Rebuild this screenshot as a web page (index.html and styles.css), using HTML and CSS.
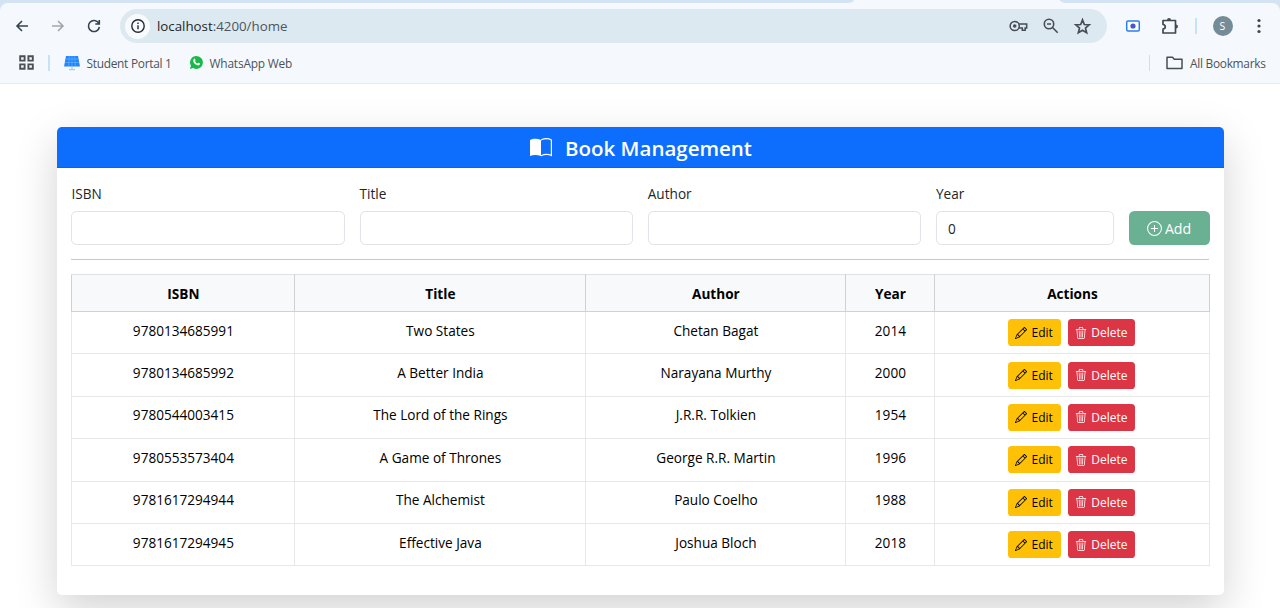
FILE: index.html
```html
<!DOCTYPE html>
<html lang="en">
<head>
<meta charset="utf-8">
<title>Book Management</title>
<link rel="stylesheet" href="styles.css">
</head>
<body>
<svg class="defs" aria-hidden="true">
  <symbol id="pencil" viewBox="0 0 16 16"><path d="M12.146.146a.5.5 0 0 1 .708 0l3 3a.5.5 0 0 1 0 .708l-10 10a.5.5 0 0 1-.168.11l-5 2a.5.5 0 0 1-.65-.65l2-5a.5.5 0 0 1 .11-.168zM11.207 2.5 13.5 4.793 14.793 3.5 12.5 1.207zm1.586 3L10.5 3.207 4 9.707V10h.5a.5.5 0 0 1 .5.5v.5h.5a.5.5 0 0 1 .5.5v.5h.293zm-9.761 5.175-.106.106-1.528 3.821 3.821-1.528.106-.106A.5.5 0 0 1 5 12.5V12h-.5a.5.5 0 0 1-.5-.5V11h-.5a.5.5 0 0 1-.468-.325"/></symbol>
  <symbol id="trash" viewBox="0 0 16 16"><path d="M6.5 1h3a.5.5 0 0 1 .5.5v1H6v-1a.5.5 0 0 1 .5-.5M11 2.5v-1A1.5 1.5 0 0 0 9.500 0h-3A1.5 1.5 0 0 0 5 1.500v1H1.500a.5.5 0 0 0 0 1h.538l.853 10.660A2 2 0 0 0 4.885 16h6.230a2 2 0 0 0 1.994-1.840l.853-10.660h.538a.5.5 0 0 0 0-1zm1.958 1-.846 10.580a1 1 0 0 1-.997.920H4.885a1 1 0 0 1-.997-.920L3.042 3.500zm-7.487 1a.5.5 0 0 1 .528.470l.5 8.500a.5.5 0 0 1-.998.060L5 5.030a.5.5 0 0 1 .471-.530m5.058 0a.5.5 0 0 1 .470.530l-.5 8.500a.5.5 0 1 1-.998-.060l.5-8.500a.5.5 0 0 1 .528-.470M8 4.500a.5.5 0 0 1 .5.5v8.500a.5.5 0 0 1-1 0V5a.5.5 0 0 1 .5-.5"/></symbol>
</svg>
<header class="browser">
  <div class="tabstrip"><span class="tab-left"></span><span class="tab-right"></span></div>
  <div class="chrome">
    <div class="toolbar">
      <svg class="nav back" viewBox="0 0 16 16"><path d="M14 8H3M8 3 3 8l5 5"/></svg>
      <svg class="nav forward" viewBox="0 0 16 16"><path d="M2 8h11M8 3l5 5-5 5"/></svg>
      <svg class="nav reload" viewBox="0 0 16 16"><path d="M12.700 5.200A5.500 5.500 0 1 0 13.400 9M13.300 2v4H9.300"/></svg>
      <div class="omnibox">
        <span class="site-info"><svg viewBox="0 0 16 16"><circle cx="8" cy="8" r="6.200"/><path d="M8 7.300v4M8 4.500v1.400"/></svg></span>
        <span class="url"><span class="host">localhost</span>:4200/home</span>
        <svg class="oicon key" viewBox="0 0 20 14"><circle cx="6" cy="7" r="4.800"/><circle class="solid" cx="6" cy="7" r="1.900"/><path d="M10.300 5h8.300v4h-1.600v2.500h-3V9h-3.700"/></svg>
        <svg class="oicon lens" viewBox="0 0 16 16"><circle cx="6" cy="6" r="4.700"/><path d="m9.300 9.300 5.400 5.400M4 6h4"/></svg>
        <svg class="oicon star" viewBox="0 0 16 16"><path d="m8 1.800 1.700 4.300 4.600.3-3.500 3 1.100 4.500L8 11.500l-3.900 2.400 1.100-4.500-3.500-3 4.600-.3z"/></svg>
      </div>
      <svg class="ext" viewBox="0 0 16 12"><rect x="1.700" y="1" width="12.600" height="10" rx="1.500"/><circle cx="8" cy="6" r="2.600"/></svg>
      <svg class="puzzle" viewBox="0 0 18 18"><path d="M2 3.500h12.500v12.500H2v-4c3-.2 3-4.300 0-4.500z"/><path class="solid" d="M6 3a2 2 0 0 1 4 0zM15 7.500a2 2 0 0 1 0 4z"/></svg>
      <span class="divider tool-divider"></span>
      <span class="avatar">S</span>
      <svg class="dots" viewBox="0 0 4 16"><circle cx="2" cy="2.500" r="1.600"/><circle cx="2" cy="8" r="1.600"/><circle cx="2" cy="13.500" r="1.600"/></svg>
    </div>
    <nav class="bookmarks">
      <svg class="apps" viewBox="0 0 15 15"><path d="M1.200 1.200h4.400v4.400H1.200zM9.400 1.200h4.400v4.400H9.400zM1.200 9.400h4.400v4.400H1.200zM9.400 9.400h4.400v4.400H9.400z"/></svg>
      <span class="divider"></span>
      <svg class="solar" viewBox="0 0 16 16"><path class="panel" d="M2 1h12l2 10.500H0z"/><path class="grid" d="M1.800 4h12.600M1 7.500h14M5.300 1l-.7 10.500M8 1v10.500M10.700 1l.7 10.500"/><path class="stand" d="M8 12v2M5 14.700h6"/></svg>
      <span class="bm student">Student Portal 1</span>
      <svg class="whatsapp" viewBox="0 0 16 16"><path class="bubble" d="M8 1a6.900 6.900 0 1 1-3.400 12.900L1 15l1.100-3.600A6.900 6.900 0 0 1 8 1z"/><path class="phone" d="M5.200 4.200c.8-.7 1.200-.3 1.700 1 .2.600-.1.900-.5 1.400.6 1.200 1.500 2 2.700 2.500.5-.5.700-1 1.200-.8 1.600.7 1.700.9 1.400 1.600-.7 1.600-2.500 1.500-4.500.3C5.200 8.900 3.600 6.100 5.200 4.200z"/></svg>
      <span class="bm wa">WhatsApp Web</span>
      <span class="divider push"></span>
      <svg class="folder" viewBox="0 0 17 14"><path d="M1 1.200h5.500l1.800 2H16V12.500H1z"/></svg>
      <span class="bm all">All Bookmarks</span>
    </nav>
  </div>
</header>
<main class="page">
  <section class="card">
    <h1 class="card-header"><svg viewBox="0 0 24 20"><path class="leaf" d="M1 2C4 .3 8.500.3 12 2v16c-3.500-1.400-8-1.400-11 0z"/><path class="outline" d="M12 2c3.500-1.700 7.500-1.700 10.400 0v15.500c-3-1.400-7-1.300-10.400.2"/></svg><span>Book Management</span></h1>
    <div class="card-body">
      <form class="book-form">
        <label>ISBN<input type="text"></label>
        <label>Title<input type="text"></label>
        <label>Author<input type="text"></label>
        <label>Year<input type="text" value="0"></label>
        <button type="button" class="add"><svg viewBox="0 0 16 16"><circle cx="8" cy="8" r="7.400"/><path d="M8 4.200v7.600M4.200 8h7.600"/></svg><span>Add</span></button>
      </form>
      <hr>
      <table>
        <colgroup><col class="c-isbn"><col class="c-title"><col class="c-author"><col class="c-year"><col class="c-actions"></colgroup>
        <thead><tr><th>ISBN</th><th>Title</th><th>Author</th><th>Year</th><th>Actions</th></tr></thead>
        <tbody>
          <tr><td>9780134685991</td><td>Two States</td><td>Chetan Bagat</td><td>2014</td><td><div class="actions"><button class="edit"><svg><use href="#pencil"/></svg>Edit</button><button class="delete"><svg><use href="#trash"/></svg>Delete</button></div></td></tr>
          <tr><td>9780134685992</td><td>A Better India</td><td>Narayana Murthy</td><td>2000</td><td><div class="actions"><button class="edit"><svg><use href="#pencil"/></svg>Edit</button><button class="delete"><svg><use href="#trash"/></svg>Delete</button></div></td></tr>
          <tr><td>9780544003415</td><td>The Lord of the Rings</td><td>J.R.R. Tolkien</td><td>1954</td><td><div class="actions"><button class="edit"><svg><use href="#pencil"/></svg>Edit</button><button class="delete"><svg><use href="#trash"/></svg>Delete</button></div></td></tr>
          <tr><td>9780553573404</td><td>A Game of Thrones</td><td>George R.R. Martin</td><td>1996</td><td><div class="actions"><button class="edit"><svg><use href="#pencil"/></svg>Edit</button><button class="delete"><svg><use href="#trash"/></svg>Delete</button></div></td></tr>
          <tr><td>9781617294944</td><td>The Alchemist</td><td>Paulo Coelho</td><td>1988</td><td><div class="actions"><button class="edit"><svg><use href="#pencil"/></svg>Edit</button><button class="delete"><svg><use href="#trash"/></svg>Delete</button></div></td></tr>
          <tr><td>9781617294945</td><td>Effective Java</td><td>Joshua Bloch</td><td>2018</td><td><div class="actions"><button class="edit"><svg><use href="#pencil"/></svg>Edit</button><button class="delete"><svg><use href="#trash"/></svg>Delete</button></div></td></tr>
        </tbody>
      </table>
    </div>
  </section>
</main>
</body>
</html>
```
FILE: styles.css
```css
* { box-sizing: border-box; }
body {
  margin: 0;
  height: 608px;
  overflow: hidden;
  background: #fff;
  color: #212529;
  font-family: "Open Sans", "Noto Sans", sans-serif;
  font-size: 13.6px;
}
svg { flex: none; fill: none; overflow: visible; }
.defs { position: absolute; width: 0; height: 0; }
.browser { height: 84px; background: #d3e3f3; }
.tabstrip { height: 3px; display: flex; justify-content: space-between; background: #f5f9fe; }
.tab-left { width: 854px; background: #d3e3f3; border-bottom-right-radius: 6px 3px; }
.tab-right { width: 220px; background: #d3e3f3; border-bottom-left-radius: 6px 3px; }
.chrome { height: 81px; background: #f5f9fe; border-radius: 8px 8px 0 0; border-bottom: 1px solid #e3ebf1; }
.toolbar { height: 46px; display: flex; align-items: center; padding-left: 14px; }
.nav { width: 16px; height: 16px; stroke: #34434e; stroke-width: 1.6; }
.forward { margin-left: 20px; stroke: #a0a7ad; }
.reload { margin-left: 20px; }
.omnibox { display: flex; align-items: center; width: 987px; height: 34px; margin-left: 18px; padding-left: 5px; border-radius: 17px; background: #dde9f0; }
.site-info { display: flex; align-items: center; justify-content: center; width: 25px; height: 25px; border-radius: 50%; background: #f8fbfe; }
.site-info svg { width: 16px; height: 16px; stroke: #23292e; stroke-width: 1.4; }
.url { margin-left: 7px; width: 852px; font-size: 13.3px; color: #4a555e; white-space: nowrap; }
.host { color: #20272c; }
.oicon { stroke: #454e56; stroke-width: 1.6; }
.oicon .solid, .puzzle .solid { fill: #454e56; stroke: none; }
.key { width: 19px; height: 14px; }
.lens { width: 16px; height: 16px; margin-left: 15px; }
.star { width: 17px; height: 17px; margin-left: 15px; }
.ext { width: 16px; height: 12px; margin-left: 18px; }
.ext rect { stroke: #2b7de9; stroke-width: 1.5; fill: #fff; }
.ext circle { fill: #4b55cf; }
.puzzle { width: 18px; height: 18px; margin-left: 20px; stroke: #3c4852; stroke-width: 1.7; stroke-linejoin: round; }
.divider { width: 1.5px; height: 16px; background: #c6e2f8; }
.tool-divider { margin-left: 16px; }
.avatar { width: 20px; height: 20px; margin-left: 16px; border-radius: 50%; background: #758c98; color: #fff; font-size: 10.5px; line-height: 20px; text-align: center; }
.dots { width: 4px; height: 16px; margin-left: 24px; fill: #3c464e; }
.bookmarks { display: flex; align-items: center; height: 27px; padding: 0 14px 0 19px; font-size: 11.9px; color: #4a535b; }
.apps { width: 15px; height: 15px; margin-right: 14px; stroke: #4c4f55; stroke-width: 1.9; }
.solar { width: 16px; height: 16px; margin: 0 7px 0 14px; }
.panel { fill: #2385fb; }
.grid { stroke: #6bb5ff; stroke-width: .6; }
.stand { stroke: #a6cdf4; stroke-width: 1.2; }
.bm { white-space: nowrap; }
.student { width: 85px; letter-spacing: -.28px; }
.wa { width: 83px; letter-spacing: -.18px; }
.all { width: 76px; letter-spacing: -.28px; }
.whatsapp { width: 15px; height: 15px; margin: 0 6px 0 17px; }
.bubble { fill: #18b84a; }
.phone { fill: #fff; }
.push { margin-left: auto; }
.folder { width: 17px; height: 14px; margin: 0 7px 0 16px; stroke: #454d55; stroke-width: 1.5; stroke-linejoin: round; }

.page { padding: 43px 56px 0 57px; }
.card { height: 468px; background: #fff; border-radius: 5px; box-shadow: 0 14.4px 43px rgba(0, 0, 0, .175); }
.card-header { display: flex; align-items: center; justify-content: center; gap: 12px; height: 41px; margin: 0; padding-top: 2px; border-radius: 5px 5px 0 0; border-bottom: 1px solid #1261d5; background: #0d6efd; color: #fff; font-size: 20.5px; font-weight: 600; white-space: nowrap; }
.card-header svg { width: 24px; height: 20px; margin-top: -1px; }
.leaf { fill: #fff; }
.outline { stroke: #fff; stroke-width: 1.2; }
.card-body { padding: 16px 15px 0 14.4px; }
.book-form { display: grid; grid-template-columns: 273.6px 273.6px 273.6px 178px 81px; column-gap: 14.6px; height: 61px; align-items: end; }
.book-form label { display: block; height: 61px; line-height: 20px; }
.book-form input { display: block; width: 100%; height: 34px; margin-top: 7px; padding: 0 11px; border: 1px solid #e0e3e7; border-radius: 5.4px; background: #fff; font: inherit; color: inherit; }
button { display: flex; align-items: center; justify-content: center; border: 0; padding: 0; font: inherit; white-space: nowrap; }
.add { height: 34px; gap: 3px; border-radius: 5.4px; background: #6ab092; color: #fff; font-size: 14.2px; }
.add svg { width: 15px; height: 15px; stroke: #fff; stroke-width: 1.1; }
hr { height: 1px; margin: 14px 0 14px; border: 0; background: #c7c8ca; }
table { width: 1139px; table-layout: fixed; border-collapse: collapse; color: #000; text-align: center; }
.c-isbn { width: 223px; }
.c-title { width: 291px; }
.c-author { width: 260px; }
.c-year { width: 89px; }
.c-actions { width: 275px; }
th { height: 37px; padding: 0; border: 1px solid #ced2d5; border-top-color: #dee2e6; background: #f8f9fa; font-size: 13.6px; font-weight: 700; }
td { height: 42.4px; padding: 0 0 5px; border: 1px solid #e6e8ea; }
.actions { display: flex; justify-content: center; gap: 7px; padding: 5px 2px 0 0; }
.actions button { height: 27px; gap: 4px; border-radius: 3.6px; font-size: 12px; }
.actions svg { width: 12px; height: 12px; fill: currentColor; }
.actions .edit { width: 53px; background: #ffc107; color: #000; }
.actions .delete { width: 67.5px; background: #dc3545; color: #fff; }
```
